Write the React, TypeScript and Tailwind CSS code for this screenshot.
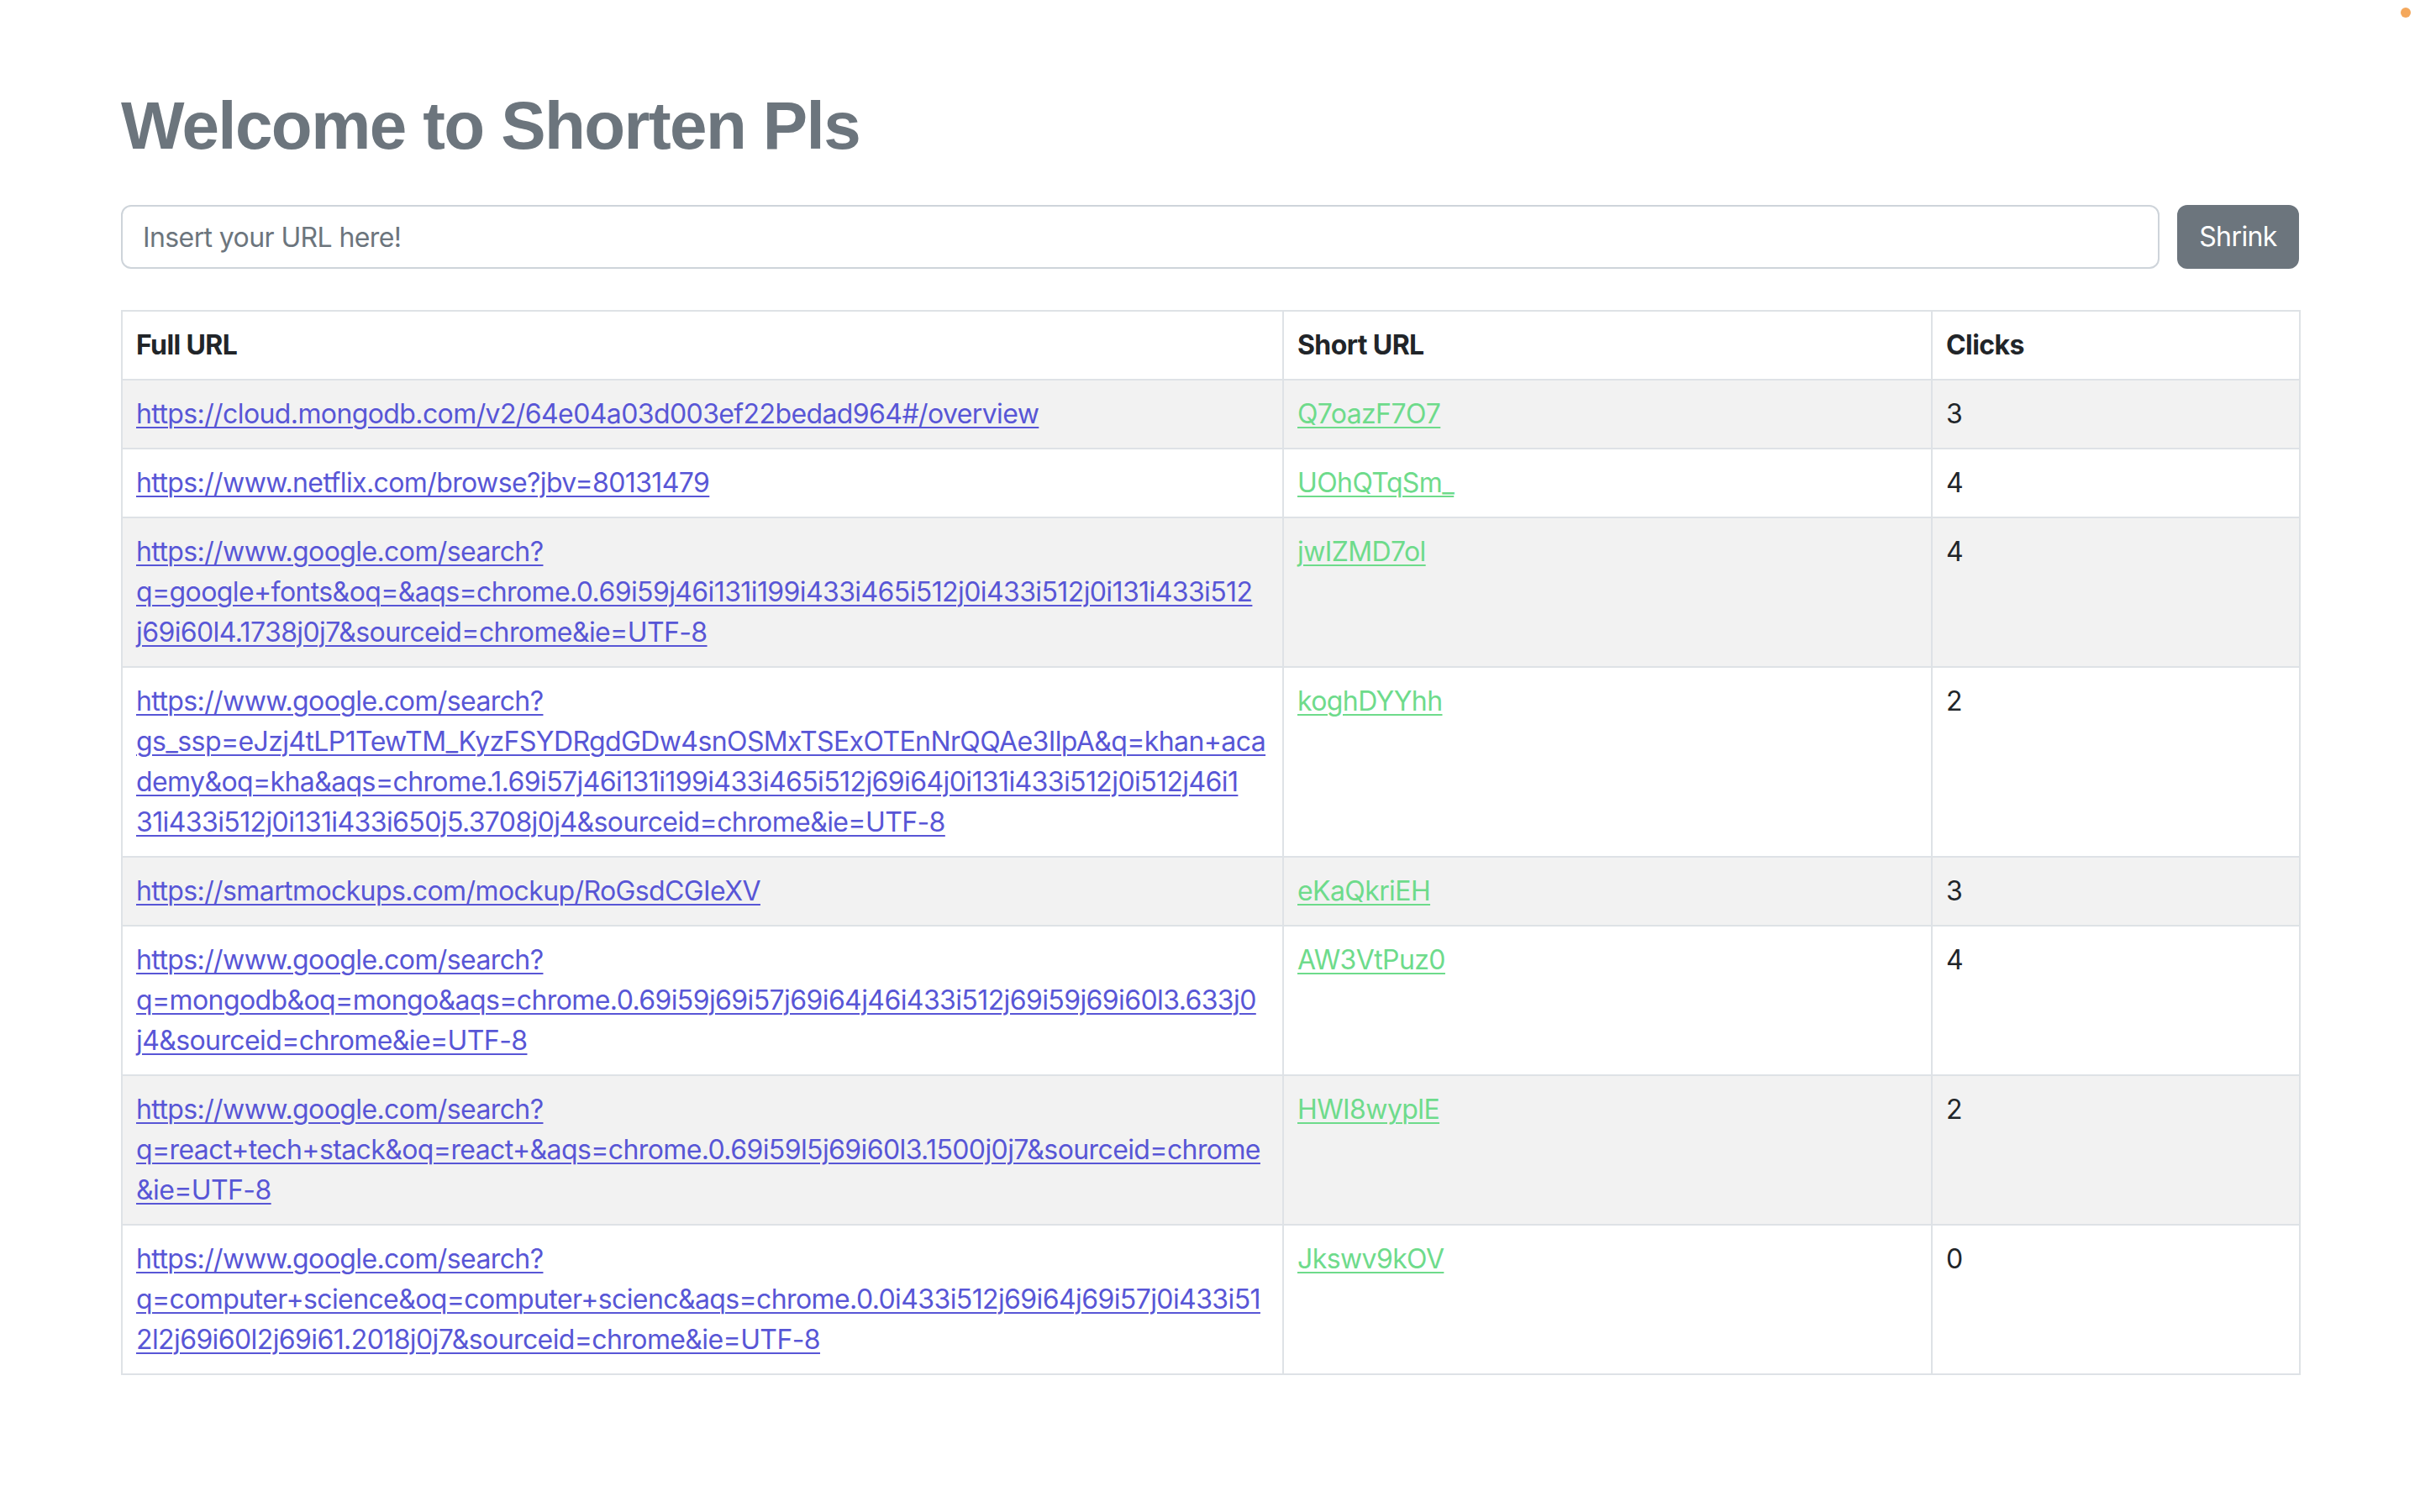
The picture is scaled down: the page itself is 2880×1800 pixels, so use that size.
import React from "react";

type Row = { full: string[]; short: string; clicks: number };

const rows: Row[] = [
  { full: ["https://cloud.mongodb.com/v2/64e04a03d003ef22bedad964#/overview"], short: "Q7oazF7O7", clicks: 3 },
  { full: ["https://www.netflix.com/browse?jbv=80131479"], short: "UOhQTqSm_", clicks: 4 },
  {
    full: [
      "https://www.google.com/search?",
      "q=google+fonts&oq=&aqs=chrome.0.69i59j46i131i199i433i465i512j0i433i512j0i131i433i512",
      "j69i60l4.1738j0j7&sourceid=chrome&ie=UTF-8",
    ],
    short: "jwIZMD7ol",
    clicks: 4,
  },
  {
    full: [
      "https://www.google.com/search?",
      "gs_ssp=eJzj4tLP1TewTM_KyzFSYDRgdGDw4snOSMxTSExOTEnNrQQAe3IlpA&q=khan+aca",
      "demy&oq=kha&aqs=chrome.1.69i57j46i131i199i433i465i512j69i64j0i131i433i512j0i512j46i1",
      "31i433i512j0i131i433i650j5.3708j0j4&sourceid=chrome&ie=UTF-8",
    ],
    short: "koghDYYhh",
    clicks: 2,
  },
  { full: ["https://smartmockups.com/mockup/RoGsdCGIeXV"], short: "eKaQkriEH", clicks: 3 },
  {
    full: [
      "https://www.google.com/search?",
      "q=mongodb&oq=mongo&aqs=chrome.0.69i59j69i57j69i64j46i433i512j69i59j69i60l3.633j0",
      "j4&sourceid=chrome&ie=UTF-8",
    ],
    short: "AW3VtPuz0",
    clicks: 4,
  },
  {
    full: [
      "https://www.google.com/search?",
      "q=react+tech+stack&oq=react+&aqs=chrome.0.69i59l5j69i60l3.1500j0j7&sourceid=chrome",
      "&ie=UTF-8",
    ],
    short: "HWI8wyplE",
    clicks: 2,
  },
  {
    full: [
      "https://www.google.com/search?",
      "q=computer+science&oq=computer+scienc&aqs=chrome.0.0i433i512j69i64j69i57j0i433i51",
      "2l2j69i60l2j69i61.2018j0j7&sourceid=chrome&ie=UTF-8",
    ],
    short: "Jkswv9kOV",
    clicks: 0,
  },
];

export default function App() {
  return (
    <div className="relative min-h-screen bg-white font-['Inter','Liberation_Sans',sans-serif] text-[32px] leading-[48px] tracking-[-0.6px] text-[#212529]">
      <div className="absolute right-[11px] top-[9px] h-[12px] w-[12px] rounded-full bg-[#f4a85c]" />
      <div className="mx-auto w-[2592px] pt-[102px]">
        <h1 className="font-['Liberation_Sans','Arial',sans-serif] text-[80px] font-bold leading-[96px] tracking-[-1.6px] text-[#6c757d]">
          Welcome to Shorten Pls
        </h1>
        <div className="mt-[46px] flex gap-[21px]">
          <input
            type="text"
            placeholder="Insert your URL here!"
            className="h-[76px] flex-1 rounded-[12px] border-2 border-[#ced4da] bg-white px-[24px] text-[32px] tracking-[-0.6px] text-[#212529] outline-none placeholder:text-[#6c757d]"
          />
          <button className="h-[76px] w-[145px] rounded-[12px] bg-[#6c757d] text-[32px] tracking-[-0.6px] text-white">
            Shrink
          </button>
        </div>
        <table className="mt-[49px] w-[2592px] table-fixed border-collapse border-2 border-[#dee2e6]">
          <colgroup>
            <col className="w-[1382px]" />
            <col className="w-[772px]" />
            <col className="w-[438px]" />
          </colgroup>
          <thead>
            <tr className="bg-white">
              <th className="border-2 border-[#dee2e6] px-[16px] py-[16px] text-left font-bold">Full URL</th>
              <th className="border-2 border-[#dee2e6] px-[16px] py-[16px] text-left font-bold">Short URL</th>
              <th className="border-2 border-[#dee2e6] px-[16px] py-[16px] text-left font-bold">Clicks</th>
            </tr>
          </thead>
          <tbody>
            {rows.map((r, i) => (
              <tr key={i} className={i % 2 === 0 ? "bg-[#f2f2f2]" : "bg-white"}>
                <td className="border-2 border-[#dee2e6] px-[16px] py-[16px] align-top">
                  <a href="#" className="text-[#5856d6] underline decoration-[2px] underline-offset-[4px]">
                    {r.full.map((line, j) => (
                      <React.Fragment key={j}>
                        <span className="whitespace-nowrap">{line}</span>
                        {j < r.full.length - 1 && <br />}
                      </React.Fragment>
                    ))}
                  </a>
                </td>
                <td className="border-2 border-[#dee2e6] px-[16px] py-[16px] align-top">
                  <a href="#" className="text-[#6edb8b] underline decoration-[2px] underline-offset-[4px]">
                    {r.short}
                  </a>
                </td>
                <td className="border-2 border-[#dee2e6] px-[16px] py-[16px] align-top">{r.clicks}</td>
              </tr>
            ))}
          </tbody>
        </table>
      </div>
    </div>
  );
}
